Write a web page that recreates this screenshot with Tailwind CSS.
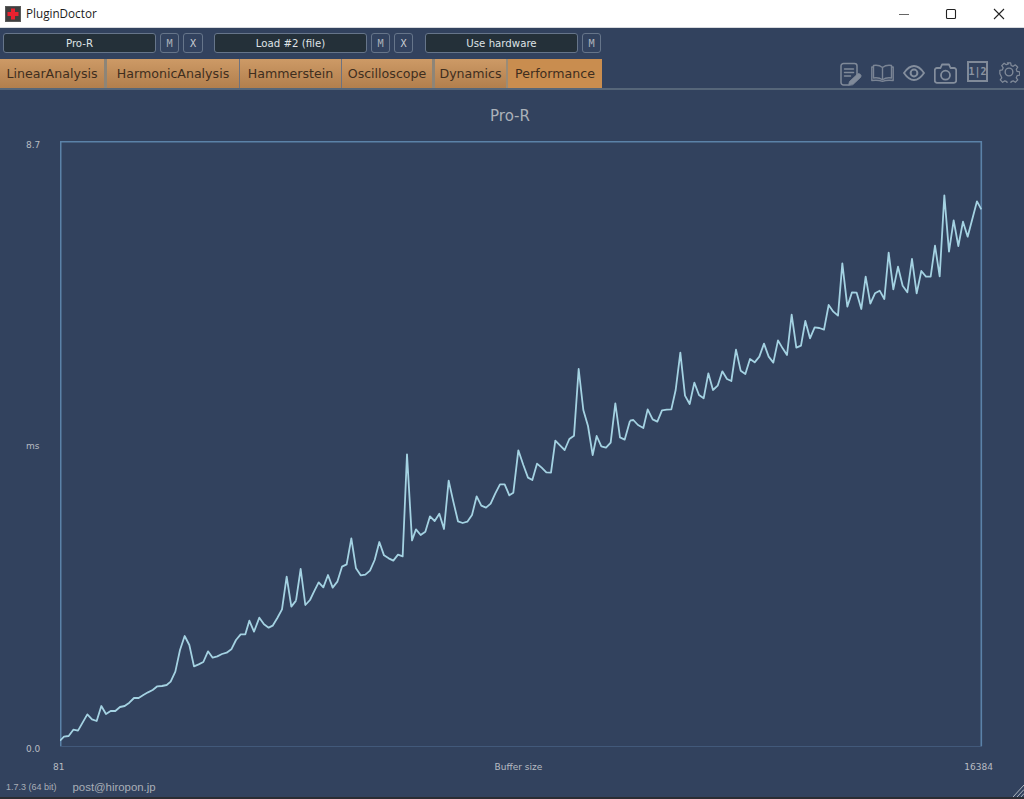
<!DOCTYPE html>
<html>
<head>
<meta charset="utf-8">
<script src="https://cdn.jsdelivr.net/npm/@tailwindcss/browser@4"></script>
</head>
<body class="h-[799px] w-[1024px] overflow-hidden bg-[#32425e] font-['DejaVu_Sans',sans-serif]">
<div class="flex h-[799px] w-[1024px] flex-col">
  <!-- Title bar -->
  <header class="flex h-[28px] shrink-0 items-center border-b border-[#d8dade] bg-white">
    <svg class="ml-[5px] h-[16px] w-[16px]" viewBox="0 0 16 16">
      <rect width="16" height="16" fill="#5a5a5a"/>
      <rect x="1" y="1" width="14" height="14" fill="#3f3f3f"/>
      <path d="M6 2.500h4v3.500h3.500v4H10v3.500H6V10H2.500V6H6z" fill="#e9212f"/>
    </svg>
    <span class="ml-[5px] font-['Open_Sans',sans-serif] text-[11.7px] text-[#1c1c1c]">PluginDoctor</span>
    <div class="ml-auto flex items-center pr-[19px]">
      <svg class="h-[12px] w-[12px]" viewBox="0 0 12 12"><path d="M1 6.500h10" stroke="#666" stroke-width="1"/></svg>
      <svg class="ml-[35px] h-[12px] w-[12px]" viewBox="0 0 12 12"><rect x="1.500" y="1.500" width="9" height="9" rx="1" fill="none" stroke="#222" stroke-width="1.100"/></svg>
      <svg class="ml-[36px] h-[12px] w-[12px]" viewBox="0 0 12 12"><path d="M1 1l10 10M11 1L1 11" stroke="#222" stroke-width="1.100"/></svg>
    </div>
  </header>

  <!-- Toolbar -->
  <div class="flex h-[31px] shrink-0 items-start pl-[3px] pt-[5px] text-[10.200px] text-[#dfe3e6]">
    <div class="flex h-[20px] w-[153px] items-center justify-center rounded-[3px] border border-[#66758a] bg-[#243039] pt-[1px]">Pro-R</div>
    <div class="ml-[4px] flex h-[20px] w-[19px] items-center justify-center rounded-[3px] border border-[#66758a] pt-[1px] font-['DejaVu_Sans_Mono',monospace] text-[#aab1ba]">M</div>
    <div class="ml-[4px] flex h-[20px] w-[20px] items-center justify-center rounded-[3px] border border-[#66758a] pt-[1px] font-['DejaVu_Sans_Mono',monospace] text-[#c8ccd2]">X</div>
    <div class="ml-[11px] flex h-[20px] w-[153px] items-center justify-center rounded-[3px] border border-[#66758a] bg-[#243039] pt-[1px]">Load #2 (file)</div>
    <div class="ml-[4px] flex h-[20px] w-[19px] items-center justify-center rounded-[3px] border border-[#66758a] pt-[1px] font-['DejaVu_Sans_Mono',monospace] text-[#aab1ba]">M</div>
    <div class="ml-[4px] flex h-[20px] w-[19px] items-center justify-center rounded-[3px] border border-[#66758a] pt-[1px] font-['DejaVu_Sans_Mono',monospace] text-[#c8ccd2]">X</div>
    <div class="ml-[12px] flex h-[20px] w-[153px] items-center justify-center rounded-[3px] border border-[#66758a] bg-[#243039] pt-[1px]">Use hardware</div>
    <div class="ml-[4px] flex h-[20px] w-[19px] items-center justify-center rounded-[3px] border border-[#66758a] pt-[1px] font-['DejaVu_Sans_Mono',monospace] text-[#aab1ba]">M</div>
  </div>

  <!-- Tabs row -->
  <nav class="flex h-[31px] shrink-0 items-start border-b-2 border-[#566679] text-[12.600px] text-[#3f2e1e]">
    <div class="flex h-[29px] w-[104px] items-center justify-center bg-gradient-to-b from-[#cd9a66] to-[#b27f4d] pt-[2px]">LinearAnalysis</div>
    <div class="h-[29px] w-[3px] bg-[#8d8578]"></div>
    <div class="flex h-[29px] w-[132px] items-center justify-center bg-gradient-to-b from-[#cd9a66] to-[#b27f4d] pt-[2px]">HarmonicAnalysis</div>
    <div class="h-[29px] w-[1px] bg-[#6d7280]"></div>
    <div class="flex h-[29px] w-[101px] items-center justify-center bg-gradient-to-b from-[#cd9a66] to-[#b27f4d] pt-[2px]">Hammerstein</div>
    <div class="h-[29px] w-[1px] bg-[#6d7280]"></div>
    <div class="flex h-[29px] w-[90px] items-center justify-center bg-gradient-to-b from-[#cd9a66] to-[#b27f4d] pt-[2px]">Oscilloscope</div>
    <div class="h-[29px] w-[3px] bg-[#8d8578]"></div>
    <div class="flex h-[29px] w-[71px] items-center justify-center bg-gradient-to-b from-[#cd9a66] to-[#b27f4d] pt-[2px]">Dynamics</div>
    <div class="h-[29px] w-[2px] bg-[#9a8c78]"></div>
    <div class="flex h-[29px] w-[94px] items-center justify-center bg-[#c98d4f] pt-[2px]">Performance</div>

    <div class="ml-auto flex items-start pr-[4px] pt-[3px]">
      <svg class="h-[24px] w-[22px]" viewBox="0 0 22 24" fill="none" stroke="#808a99" stroke-width="1.500" stroke-linecap="round" stroke-linejoin="round">
        <path d="M8 23H3.500A2.500 2.500 0 0 1 1 20.500V4A2.500 2.500 0 0 1 3.500 1.500h11A2.500 2.500 0 0 1 17 4v9"/>
        <path d="M4.500 7h9M4.500 10.500h9M4.500 14h6"/>
        <path d="M8.500 23.200l1-3.700 7.500-7a1.600 1.600 0 0 1 3.500 3l-7.500 7z" fill="#808a99" stroke-width=".8"/>
      </svg>
      <svg class="ml-[9px] mt-[2px] h-[18px] w-[23px]" viewBox="0 0 23 18" fill="none" stroke="#7a8494" stroke-width="1.400" stroke-linejoin="round">
        <path d="M11.500 3.500C9 1.500 5.500 1 2.500 1.500V14c3 -.5 6.500 0 9 1.800 2.500-1.800 6-2.300 9-1.800V1.500C17.500 1 14 1.500 11.500 3.500z"/>
        <path d="M11.500 3.500v12.500M2.500 3H.8v13.500c3.500-.4 7.500-.4 10.700.8 3.200-1.200 7.200-1.200 10.700-.8V3h-1.700"/>
      </svg>
      <svg class="ml-[9px] mt-[2px] h-[18px] w-[22px]" viewBox="0 0 22 18" fill="none" stroke="#848e9d" stroke-width="1.800">
        <path d="M1 9C4.500 3.800 8 2 11 2s6.500 1.800 10 7c-3.500 5.200-7 7-10 7S4.500 14.200 1 9z"/>
        <circle cx="11" cy="9" r="3.400" stroke-width="2"/>
      </svg>
      <svg class="ml-[9px] mt-[1px] h-[21px] w-[23px]" viewBox="0 0 23 21" fill="none" stroke="#848e9d" stroke-width="1.800" stroke-linejoin="round">
        <path d="M3 5h3.500L8 1.500h7L16.500 5H20a2.200 2.200 0 0 1 2.200 2.200v10.400A2.200 2.200 0 0 1 20 19.800H3a2.200 2.200 0 0 1-2.200-2.200V7.200A2.200 2.200 0 0 1 3 5z"/>
        <circle cx="11.500" cy="12.200" r="4.500"/>
      </svg>
      <div class="ml-[10px] -mt-[1px] flex h-[21px] w-[21px] items-center justify-center border-2 border-[#808a99] font-['DejaVu_Sans_Mono',monospace] text-[10px] font-bold text-[#8a94a2]">1|2</div>
      <svg class="ml-[10px] -mt-[1px] h-[22px] w-[22px]" viewBox="0 0 24 24" fill="none" stroke="#808a99" stroke-width="1.500" stroke-linejoin="round">
        <path d="M10 1h4l.6 3.100 2.500 1 2.600-1.800 2.900 2.900-1.800 2.600 1 2.500 3.100.6v4l-3.100.6-1 2.500 1.800 2.600-2.900 2.900-2.600-1.800-2.500 1-.6 3.100h-4l-.6-3.100-2.500-1-2.600 1.800-2.900-2.900 1.800-2.600-1-2.500L.9 14v-4l3.100-.6 1-2.500-1.800-2.600 2.900-2.900 2.600 1.800 2.500-1z" transform="translate(1.200 1.200) scale(.9)"/>
        <circle cx="12" cy="12" r="4.200"/>
      </svg>
    </div>
  </nav>

  <!-- Plot -->
  <main class="flex min-h-0 flex-1 flex-col">
    <div class="flex h-[51px] shrink-0 items-end justify-center pb-[16px] pr-[4px] text-[15px] leading-[17px] text-[#abb1b9]">Pro-R</div>
    <div class="flex h-[606px] shrink-0">
      <div class="-my-[1px] flex w-[60px] shrink-0 flex-col items-start justify-between pl-[26px] text-[9px] leading-[11px] text-[#b8bcc2]">
        <span>8.7</span>
        <span class="-mt-[3px]">ms</span>
        <span class="-mb-[7px]">0.0</span>
      </div>
      <svg class="h-[606px] w-[923px] shrink-0" viewBox="60 141 923 606" fill="none">
        <path d="M60.700 746.500V141.700H981.300V746" stroke="#5b82a8" stroke-width="1.600"/>
        <path d="M60 746.500H982" stroke="#42597a" stroke-width="1"/>
        <g stroke="#a4d2e2" stroke-width="1.800" stroke-linejoin="round">
          <polyline vector-effect="non-scaling-stroke" transform="translate(50 530) scale(.33333)" points="30,632 42,620 56,618 70,599 84,602 112,553 126,568 140,573 154,528 168,552 182,543 196,543 210,531 224,528 238,518 252,504 266,504 280,495 294,487 308,480 322,469 336,468 350,465 362,455 376,425 390,360 404,318 418,345 432,409 446,403 460,396 474,364 488,383 502,379 516,372 530,368 544,358 558,330 572,313 586,313 598,272 612,305 628,263 642,283 656,293 668,287 682,264 696,238 710,140 724,230 738,212"/>
          <polyline vector-effect="non-scaling-stroke" transform="translate(300 350) scale(.33333)" points="-12,752 2,657 16,765 30,750 42,725 56,697 70,712 84,675 98,713 112,695 126,650 140,643 154,565 168,655 182,676 196,674 210,662 224,630 238,576 252,616 266,625 280,632 294,614 308,619 321,313 336,571 348,538 362,555 376,545 390,499 404,513 418,491 432,537 446,392 460,455 474,514 488,519 502,515 516,495 530,439 544,467 558,473 572,461 586,430 600,403 614,403 628,436 640,428 655,301 670,345 684,383 697,390 711,341 725,353 739,367 753,368 766,272 780,286 794,300 808,267 822,257 836,57 850,180 864,228 878,315 890,258 904,289 918,293 932,278 946,160 960,262 974,269 990,212"/>
          <polyline vector-effect="non-scaling-stroke" transform="translate(630 180) scale(.33333)" points="0,722 10,720 24,735 40,744 53,688 68,718 82,725 96,691 110,689 124,688 137,630 151,518 165,647 179,672 193,608 207,645 221,655 235,580 249,630 263,617 277,574 291,597 304,603 318,509 332,572 346,582 360,537 374,547 388,530 402,491 416,530 430,548 444,481 458,505 471,525 485,404 499,503 513,497 526,423 540,475 554,442 568,444 582,449 596,375 610,395 624,407 637,250 652,380 666,337 680,338 694,387 707,290 721,371 735,340 749,332 763,357 776,218 790,328 804,260 818,317 832,337 846,237 860,340 874,273 888,290 902,290 915,197 929,289 943,46 957,215 971,121 985,198 999,125 1013,170 1041,64 1054,88"/>
        </g>
      </svg>
    </div>
    <div class="flex h-[26px] shrink-0 items-center justify-between pl-[53px] pr-[31px] pt-[14px] text-[9px] leading-[11px] text-[#b8bcc2]">
      <span>81</span>
      <span class="ml-[8px]">Buffer size</span>
      <span>16384</span>
    </div>
    <footer class="relative flex min-h-0 flex-1 items-start pl-[6px] pt-[7px] font-['Liberation_Sans',sans-serif] text-[#a9aeb6]">
      <span class="text-[9px] leading-[14px]">1.7.3 (64 bit)</span>
      <span class="ml-[16px] text-[11.400px] leading-[14px]">post@hiropon.jp</span>
      <svg class="absolute bottom-0 right-0 h-[12px] w-[11px]" viewBox="0 0 11 12" stroke="#aeb6bf" stroke-width="1"><path d="M0 12L11 0M4 12L11 4.500M8 12L11 8.500"/></svg>
    </footer>
    <div class="h-[2px] shrink-0 bg-[#2a2d33]"></div>
  </main>
</div>
</body>
</html>
